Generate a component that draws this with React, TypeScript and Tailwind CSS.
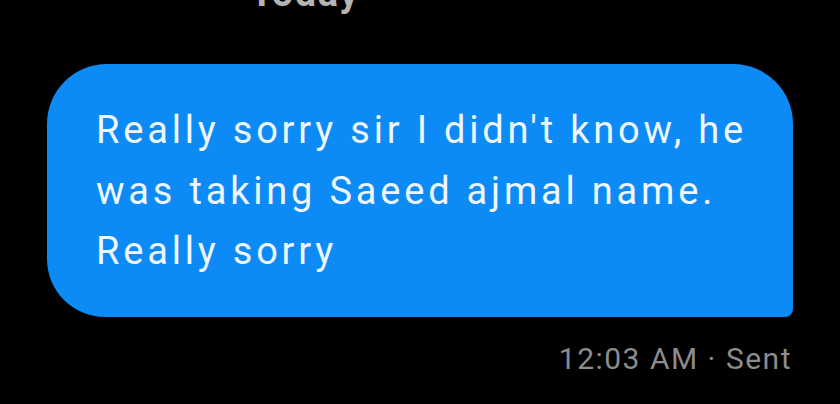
import React from "react";

const font = { fontFamily: "Roboto, 'Noto Sans', sans-serif" };

const App: React.FC = () => {
  return (
    <div
      className="w-[840px] h-[404px] bg-black overflow-hidden flex flex-col"
      style={font}
    >
      {/* Day divider, cut off by the top edge */}
      <div className="h-[18px] flex items-end pl-[250px]">
        <span className="text-[38px] leading-none font-bold text-[#b4b4b4] tracking-[1.5px] translate-y-[-6px]">
          Today
        </span>
      </div>

      {/* Sent bubble */}
      <div className="mt-[46px] ml-[47px] w-[746px] h-[253px] bg-[#0c8af5] rounded-tl-[60px] rounded-tr-[60px] rounded-bl-[58px] rounded-br-[8px] pl-[49px] pt-[36px]">
        <p className="text-[38px] leading-[60.5px] text-[#eef6ff] tracking-[3.8px]">
          Really sorry sir I didn't know, he
          <br />
          was taking Saeed ajmal name.
          <br />
          Really sorry
        </p>
      </div>

      {/* Meta line */}
      <div className="w-[792px] flex justify-end mt-[27px]">
        <span className="text-[30px] leading-none text-[#8c8c8c] tracking-[1.5px]">
          12:03 AM · Sent
        </span>
      </div>
    </div>
  );
};

export default App;
